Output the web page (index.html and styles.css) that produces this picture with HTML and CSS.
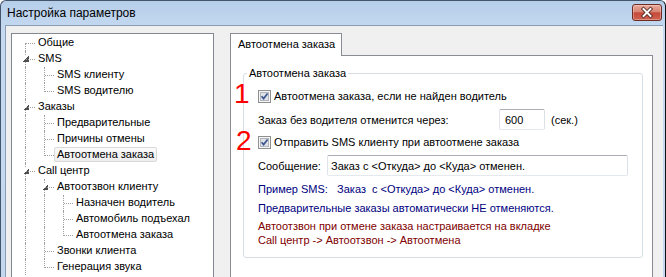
FILE: index.html
```html
<!DOCTYPE html>
<html lang="ru">
<head>
    <meta charset="UTF-8">
    <title>Настройка параметров</title>
    <link rel="stylesheet" href="styles.css">
</head>
<body>
    <div class="window">
        <div class="titlebar">
            <span class="title">Настройка параметров</span>
            <div class="close">
                <svg width="28" height="15" viewBox="0 0 28 15">
                    <path d="M10.5 4 L17.5 11 M17.5 4 L10.5 11" stroke="#4b1d17" stroke-width="3.6" stroke-linecap="square" fill="none"/>
                    <path d="M10.5 4 L17.5 11 M17.5 4 L10.5 11" stroke="#ffffff" stroke-width="2" stroke-linecap="square" fill="none"/>
                </svg>
            </div>
        </div>

        <div class="client">
            <!-- tree of settings pages -->
            <div class="tree">
                <div class="row"><i class="c first"></i><span class="label">Общие</span></div>
                <div class="row"><i class="c tee exp"><b class="tri"></b></i><span class="label">SMS</span></div>
                <div class="row"><i class="c pipe"></i><i class="c tee"></i><span class="label">SMS клиенту</span></div>
                <div class="row"><i class="c pipe"></i><i class="c last"></i><span class="label">SMS водителю</span></div>
                <div class="row"><i class="c tee exp"><b class="tri"></b></i><span class="label">Заказы</span></div>
                <div class="row"><i class="c pipe"></i><i class="c tee"></i><span class="label">Предварительные</span></div>
                <div class="row"><i class="c pipe"></i><i class="c tee"></i><span class="label">Причины отмены</span></div>
                <div class="row"><i class="c pipe"></i><i class="c last"></i><span class="label selected">Автоотмена заказа</span></div>
                <div class="row"><i class="c tee exp"><b class="tri"></b></i><span class="label">Call центр</span></div>
                <div class="row"><i class="c pipe"></i><i class="c tee exp"><b class="tri"></b></i><span class="label">Автоотзвон клиенту</span></div>
                <div class="row"><i class="c pipe"></i><i class="c pipe"></i><i class="c tee"></i><span class="label">Назначен водитель</span></div>
                <div class="row"><i class="c pipe"></i><i class="c pipe"></i><i class="c tee"></i><span class="label">Автомобиль подъехал</span></div>
                <div class="row"><i class="c pipe"></i><i class="c pipe"></i><i class="c last"></i><span class="label">Автоотмена заказа</span></div>
                <div class="row"><i class="c pipe"></i><i class="c tee"></i><span class="label">Звонки клиента</span></div>
                <div class="row"><i class="c pipe"></i><i class="c last"></i><span class="label">Генерация звука</span></div>
            </div>

            <div class="tabs">
                <div class="tab-strip">
                    <div class="tab">Автоотмена заказа</div>
                </div>
                <div class="panel">
                    <fieldset class="group">
                        <legend>Автоотмена заказа</legend>
                        <div class="group-body">
                            <div class="check-row first-check">
                                <span class="mark mark-1">1</span>
                                <svg class="checkbox" width="13" height="13" viewBox="0 0 13 13">
                                    <rect x="0.5" y="0.5" width="12" height="12" fill="#f6f6f6" stroke="#8e8f8f"/>
                                    <rect x="2.5" y="2.5" width="8" height="8" fill="#dfe2e6" stroke="#b2b6bc"/>
                                    <path d="M3.6 6.2 L5.6 8.6 L9.6 3.4" stroke="#3d5690" stroke-width="1.7" fill="none"/>
                                </svg>
                                <span>Автоотмена заказа, если не найден водитель</span>
                            </div>
                            <div class="field-row">
                                <span class="caption-wide">Заказ без водителя отменится через:</span>
                                <input class="edit edit-short" type="text" value="600">
                                <span class="unit">(сек.)</span>
                            </div>
                            <div class="check-row second-check">
                                <span class="mark mark-2">2</span>
                                <svg class="checkbox" width="13" height="13" viewBox="0 0 13 13">
                                    <rect x="0.5" y="0.5" width="12" height="12" fill="#f6f6f6" stroke="#8e8f8f"/>
                                    <rect x="2.5" y="2.5" width="8" height="8" fill="#dfe2e6" stroke="#b2b6bc"/>
                                    <path d="M3.6 6.2 L5.6 8.6 L9.6 3.4" stroke="#3d5690" stroke-width="1.7" fill="none"/>
                                </svg>
                                <span>Отправить SMS клиенту при автоотмене заказа</span>
                            </div>
                            <div class="field-row">
                                <span class="caption">Сообщение:</span>
                                <input class="edit edit-long" type="text" value="Заказ с &lt;Откуда&gt; до &lt;Куда&gt; отменен.">
                            </div>
                            <p class="note sample">Пример SMS:   Заказ  с &lt;Откуда&gt; до &lt;Куда&gt; отменен.</p>
                            <p class="note second-note">Предварительные заказы автоматически НЕ отменяются.</p>
                            <p class="warn">Автоотзвон при отмене заказа настраивается на вкладке<br>Call центр -&gt; Автоотзвон -&gt; Автоотмена</p>
                        </div>
                    </fieldset>
                </div>
            </div>
        </div>
    </div>
</body>
</html>
```

FILE: styles.css
```css
* {
    margin: 0;
    padding: 0;
    box-sizing: border-box;
}

body {
    font-family: "Liberation Sans", Arial, sans-serif;
    font-size: 11px;
    color: #000;
    overflow: hidden;
}

/* window frame */
.window {
    height: 277px;
    display: flex;
    flex-direction: column;
    background: linear-gradient(#b7cee9, #c5daf1 30px, #c3d8ef);
    border: 1px solid #43546b;
    border-right-color: #111;
    border-bottom: none;
    border-radius: 6px 6px 0 0;
    padding: 0 2px 0 4px;
}

.titlebar {
    height: 24px;
    display: flex;
    justify-content: space-between;
    padding-left: 2px;
}

.title {
    font-size: 12px;
    line-height: 24px;
}

.close {
    width: 30px;
    height: 17px;
    margin: 3px 1px 0 0;
    border: 1px solid #6d2b22;
    border-radius: 3px;
    background: linear-gradient(#e9a99b, #d98574 45%, #c5493a 52%, #cf6250);
    box-shadow: inset 0 0 0 1px rgba(255, 255, 255, 0.3);
}

    .close svg {
        display: block;
    }

.client {
    flex: 1;
    min-height: 0;
    display: flex;
    gap: 16px;
    background: #f0f0f0;
    border-top: 1px solid #8b9db4;
    border-left: 1px solid #8b9db4;
    padding: 7px 10px 0 5px;
    overflow: hidden;
}

/* tree */
.tree {
    width: 203px;
    flex: none;
    background: #fff;
    border: 1px solid #828790;
    border-bottom: none;
    padding: 1px 0 0 4px;
}

.row {
    display: flex;
    height: 16px;
    white-space: nowrap;
}

.c {
    position: relative;
    width: 19px;
    height: 16px;
    flex: none;
}

    .c::before,
    .c::after {
        content: '';
        position: absolute;
    }

    .c.pipe::before,
    .c.tee::before {
        left: 9px;
        top: 0;
        bottom: 0;
        border-left: 1px dotted #a0a0a0;
    }

    .c.first::before {
        left: 9px;
        top: 8px;
        bottom: 0;
        border-left: 1px dotted #a0a0a0;
    }

    .c.last::before {
        left: 9px;
        top: 0;
        height: 9px;
        border-left: 1px dotted #a0a0a0;
    }

    .c.tee::after,
    .c.last::after,
    .c.first::after {
        left: 10px;
        top: 8px;
        width: 9px;
        border-top: 1px dotted #a0a0a0;
    }

.tri {
    position: absolute;
    left: 7px;
    top: 5px;
    width: 6px;
    height: 6px;
    background: linear-gradient(135deg, #fff 50%, #4d4d4d 50%);
}

.label {
    height: 15px;
    line-height: 13px;
    padding: 0 2px;
    border: 1px solid transparent;
}

    .label.selected {
        border-color: #d9d9d9;
        border-radius: 2px;
        background: linear-gradient(#fbfbfb, #ededed);
    }

/* tab control */
.tabs {
    flex: 1;
    display: flex;
    flex-direction: column;
}

.tab-strip {
    display: flex;
    height: 22px;
}

.tab {
    position: relative;
    z-index: 1;
    height: 23px;
    line-height: 21px;
    padding: 0 6px 0 7px;
    background: #fff;
    border: 1px solid #898c95;
    border-bottom: none;
}

.panel {
    flex: 1;
    background: #fff;
    border: 1px solid #898c95;
    border-bottom: none;
    padding: 10px 9px 0 12px;
}

.group {
    border: 1px solid #d5dfe5;
    border-radius: 3px;
    padding: 0 0 10px;
}

    .group legend {
        margin-left: 3px;
        padding: 0 2px;
        line-height: 14px;
    }

.group-body {
    padding-left: 14px;
}

.check-row {
    position: relative;
    display: flex;
    align-items: center;
    gap: 3px;
    height: 14px;
}

.first-check {
    margin-top: 9px;
}

.second-check {
    margin-top: 5px;
}

.checkbox {
    display: block;
    flex: none;
}

.mark {
    position: absolute;
    font-size: 28px;
    line-height: 28px;
    color: #f00;
}

.mark-1 {
    left: -24px;
    top: -9px;
}

.mark-2 {
    left: -22px;
    top: -8px;
}

.field-row {
    display: flex;
    align-items: center;
    height: 21px;
    margin-top: 6px;
}

.caption-wide {
    width: 241px;
}

.caption {
    width: 69px;
}

.edit {
    height: 21px;
    font: inherit;
    color: #000;
    background: #fff;
    border: 1px solid;
    border-color: #abadb3 #dbdfe6 #e3e9ef #e2e3ea;
    border-radius: 2px;
    outline: none;
}

.edit-short {
    width: 46px;
    padding-left: 5px;
}

.edit-long {
    width: 301px;
    padding-left: 3px;
}

.unit {
    margin-left: 6px;
}

.note {
    color: #000080;
    line-height: 14px;
    margin-top: 6px;
    white-space: pre;
}

.second-note {
    margin-top: 5px;
}

.warn {
    color: #800000;
    line-height: 14px;
    margin-top: 4px;
}
```
